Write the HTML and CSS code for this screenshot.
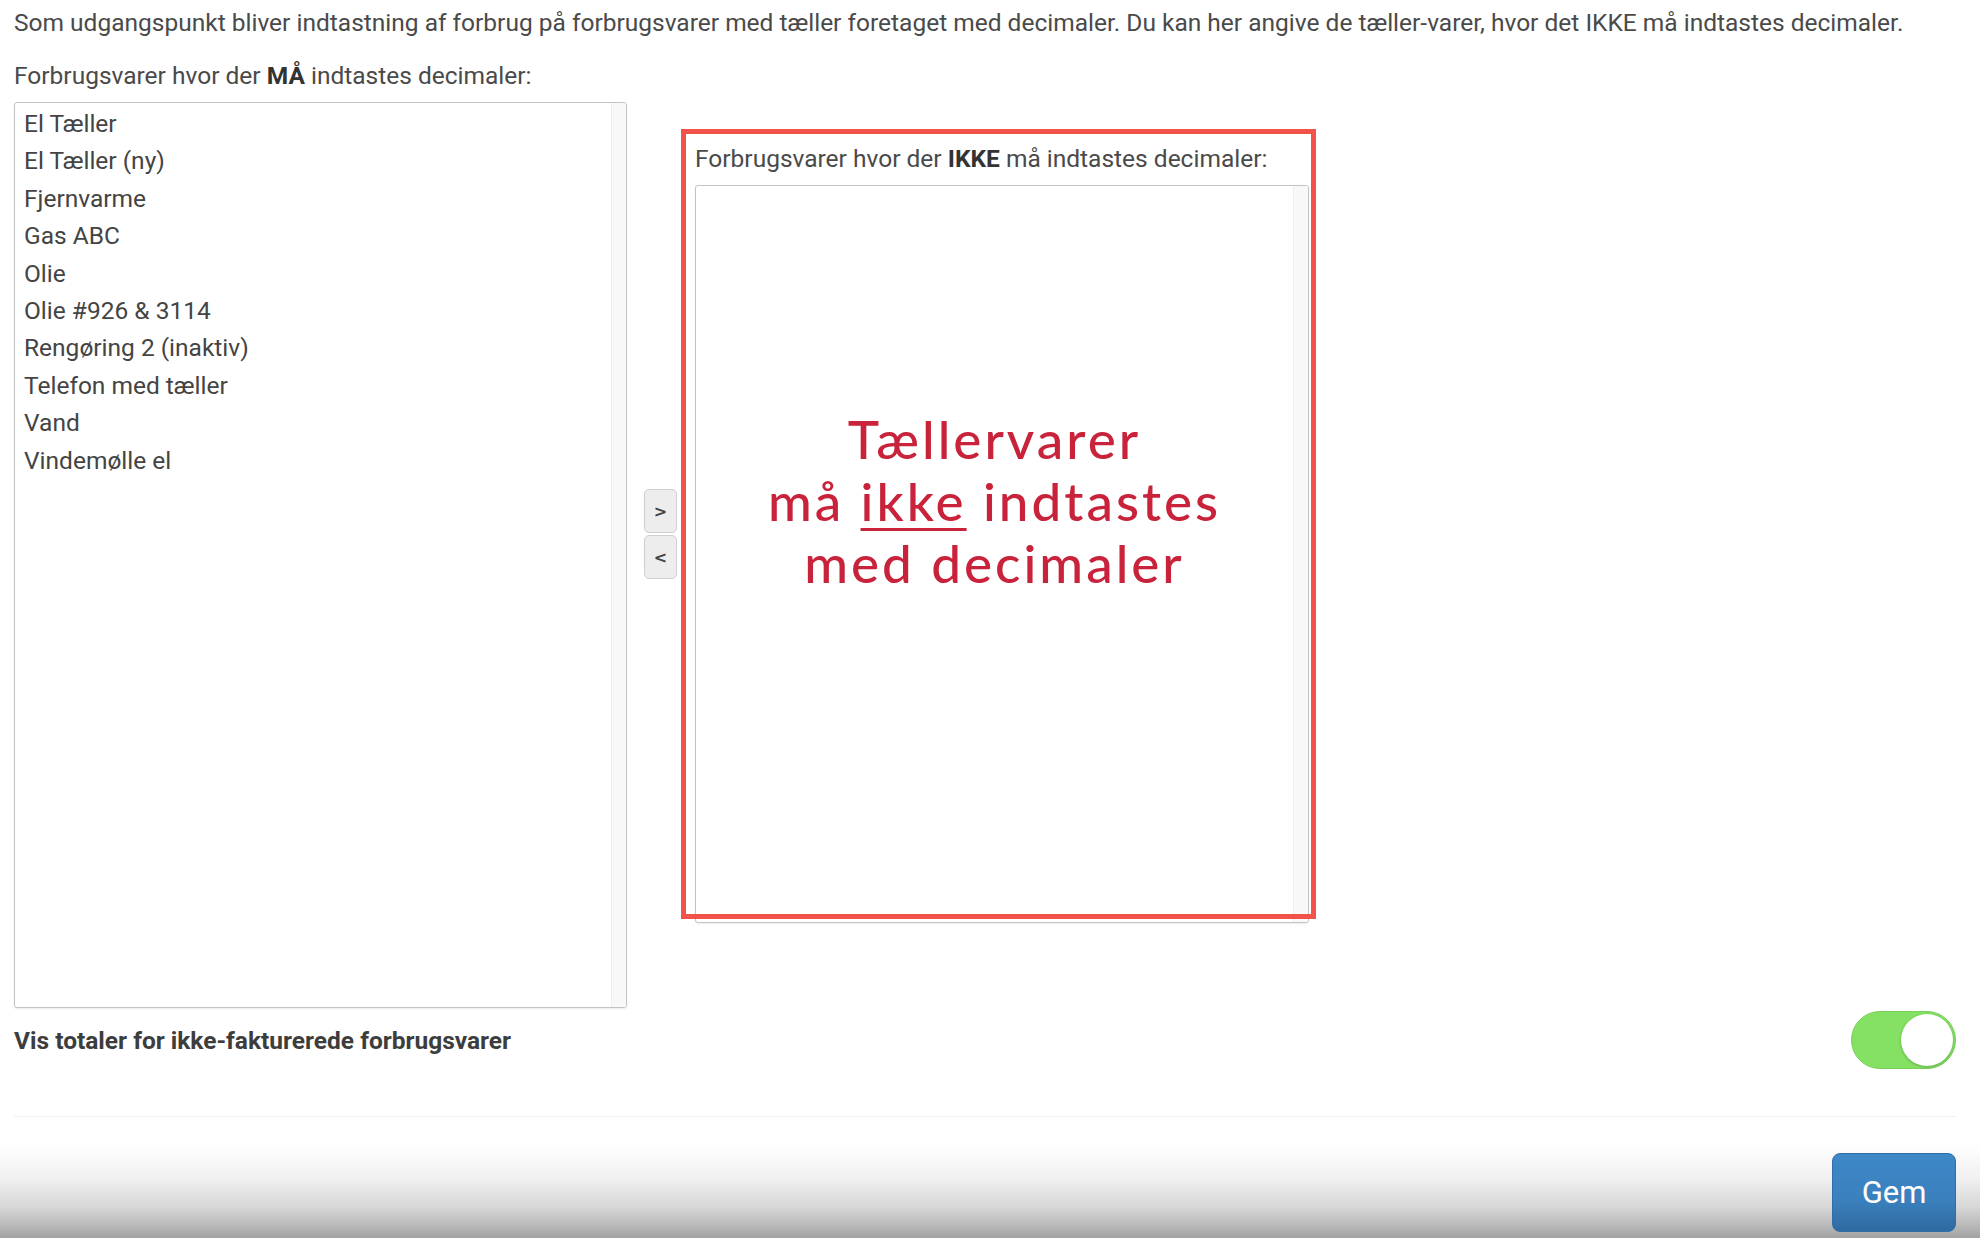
FILE: index.html
```html
<!DOCTYPE html>
<html lang="da">
<head>
<meta charset="utf-8">
<title>Forbrugsvarer decimaler</title>
<link rel="stylesheet" href="styles.css">
</head>
<body>
<main class="page">
  <p class="intro">Som udgangspunkt bliver indtastning af forbrug på forbrugsvarer med tæller foretaget med decimaler. Du kan her angive de tæller-varer, hvor det IKKE må indtastes decimaler.</p>
  <p class="label">Forbrugsvarer hvor der <b>MÅ</b> indtastes decimaler:</p>
  <div class="lists">
    <div class="listbox listbox-left">
      <ul class="options">
        <li>El Tæller</li>
        <li>El Tæller (ny)</li>
        <li>Fjernvarme</li>
        <li>Gas ABC</li>
        <li>Olie</li>
        <li>Olie #926 &amp; 3114</li>
        <li>Rengøring 2 (inaktiv)</li>
        <li>Telefon med tæller</li>
        <li>Vand</li>
        <li>Vindemølle el</li>
      </ul>
      <div class="track"></div>
    </div>
    <div class="movers">
      <button class="mover" type="button">&gt;</button>
      <button class="mover" type="button">&lt;</button>
    </div>
    <div class="right-col">
      <p class="label">Forbrugsvarer hvor der <b>IKKE</b> må indtastes decimaler:</p>
      <div class="listbox listbox-right">
        <ul class="options"></ul>
        <div class="track"></div>
        <div class="callout">Tællervarer<br>må <u>ikke</u> indtastes<br>med decimaler</div>
      </div>
      <div class="highlight"></div>
    </div>
  </div>
  <div class="setting">
    <span class="setting-label">Vis totaler for ikke-fakturerede forbrugsvarer</span>
    <span class="toggle"><span class="knob"></span></span>
  </div>
  <hr class="sep">
</main>
<footer class="footer">
  <button class="gem" type="button">Gem</button>
</footer>
</body>
</html>
```

FILE: styles.css
```css
* { box-sizing: border-box; }
html, body { margin: 0; padding: 0; background: #fff; }
body {
  font-family: Roboto, "Liberation Sans", sans-serif;
  font-size: 24.5px;
  color: #4a4a4a;
  width: 1980px;
  height: 1238px;
  overflow: hidden;
}
.page { padding: 7px 24px 0 14px; }
.intro { margin: 0; line-height: 31px; white-space: nowrap; }
.label { margin: 0; line-height: 31px; white-space: nowrap; }
.intro + .label { margin-top: 22px; }
.page > .label { margin-bottom: 11px; }
.label b { font-weight: 700; color: #333; }

.lists { display: flex; align-items: flex-start; }

.listbox {
  display: flex;
  position: relative;
  border: 1px solid #c4c4c4;
  border-radius: 3px;
  background: #fff;
  box-shadow: 0 1px 2px rgba(0,0,0,0.08);
  overflow: hidden;
}
.listbox-left { width: 613px; height: 906px; }
.listbox-right { width: 614px; height: 738px; }
.options { flex: 1; list-style: none; margin: 0; padding: 2px 0 0 9px; }
.options li { line-height: 37.4px; white-space: nowrap; color: #444; }
.track { width: 15px; background: #f8f8f8; border-left: 1px solid #eeeeee; }

.movers {
  display: flex;
  flex-direction: column;
  gap: 2px;
  margin: 387px 0 0 17px;
}
.mover {
  width: 33px;
  height: 44px;
  padding: 0;
  border: 1px solid #cfcfcf;
  border-radius: 5px;
  background: #ededed;
  color: #444;
  font-family: "DejaVu Sans", sans-serif;
  font-size: 16px;
  font-weight: 700;
}

.right-col { position: relative; margin: 41px 0 0 18px; }
.right-col .label { margin-bottom: 11px; }
.highlight {
  position: absolute;
  left: -14px;
  top: -14px;
  right: -7px;
  bottom: 4px;
  border: 5px solid #f1534b;
  pointer-events: none;
}
.callout {
  position: absolute;
  left: 0;
  right: 15px;
  top: 222px;
  text-align: center;
  font-family: Lato, "Open Sans", sans-serif;
  font-size: 53px;
  line-height: 62px;
  font-weight: 500;
  letter-spacing: 3px;
  color: #c8233a;
}
.callout u { text-decoration-thickness: 3px; text-underline-offset: 7px; }

.setting {
  display: flex;
  justify-content: space-between;
  align-items: center;
  margin-top: 3px;
}
.setting-label { font-weight: 700; color: #3d3d3d; }
.toggle {
  position: relative;
  width: 105px;
  height: 58px;
  border-radius: 29px;
  background: #84e163;
  border: 1px solid #78d258;
}
.knob {
  position: absolute;
  right: 2px;
  top: 2px;
  width: 52px;
  height: 52px;
  border-radius: 50%;
  background: #fff;
  box-shadow: 0 1px 3px rgba(0,0,0,0.25);
}
.sep {
  margin: 47px 0 0 0;
  border: 0;
  border-top: 1px solid #f0f0f0;
  height: 0;
}

.footer {
  height: 121px;
  display: flex;
  justify-content: flex-end;
  align-items: flex-start;
  padding: 36px 24px 0 0;
  background: linear-gradient(to bottom, #ffffff 0%, #ffffff 22%, #f1f1f1 50%, #d6d6d6 75%, #b4b4b4 92%, #a2a2a2 100%);
}
.gem {
  width: 124px;
  height: 79px;
  border: 1px solid #2f6ea6;
  border-radius: 8px;
  background: linear-gradient(to bottom, #3e88c7 0%, #3a80bd 60%, #2f6aa0 100%);
  color: #fff;
  font-family: Roboto, "Liberation Sans", sans-serif;
  font-size: 31px;
  padding: 0;
}
```
